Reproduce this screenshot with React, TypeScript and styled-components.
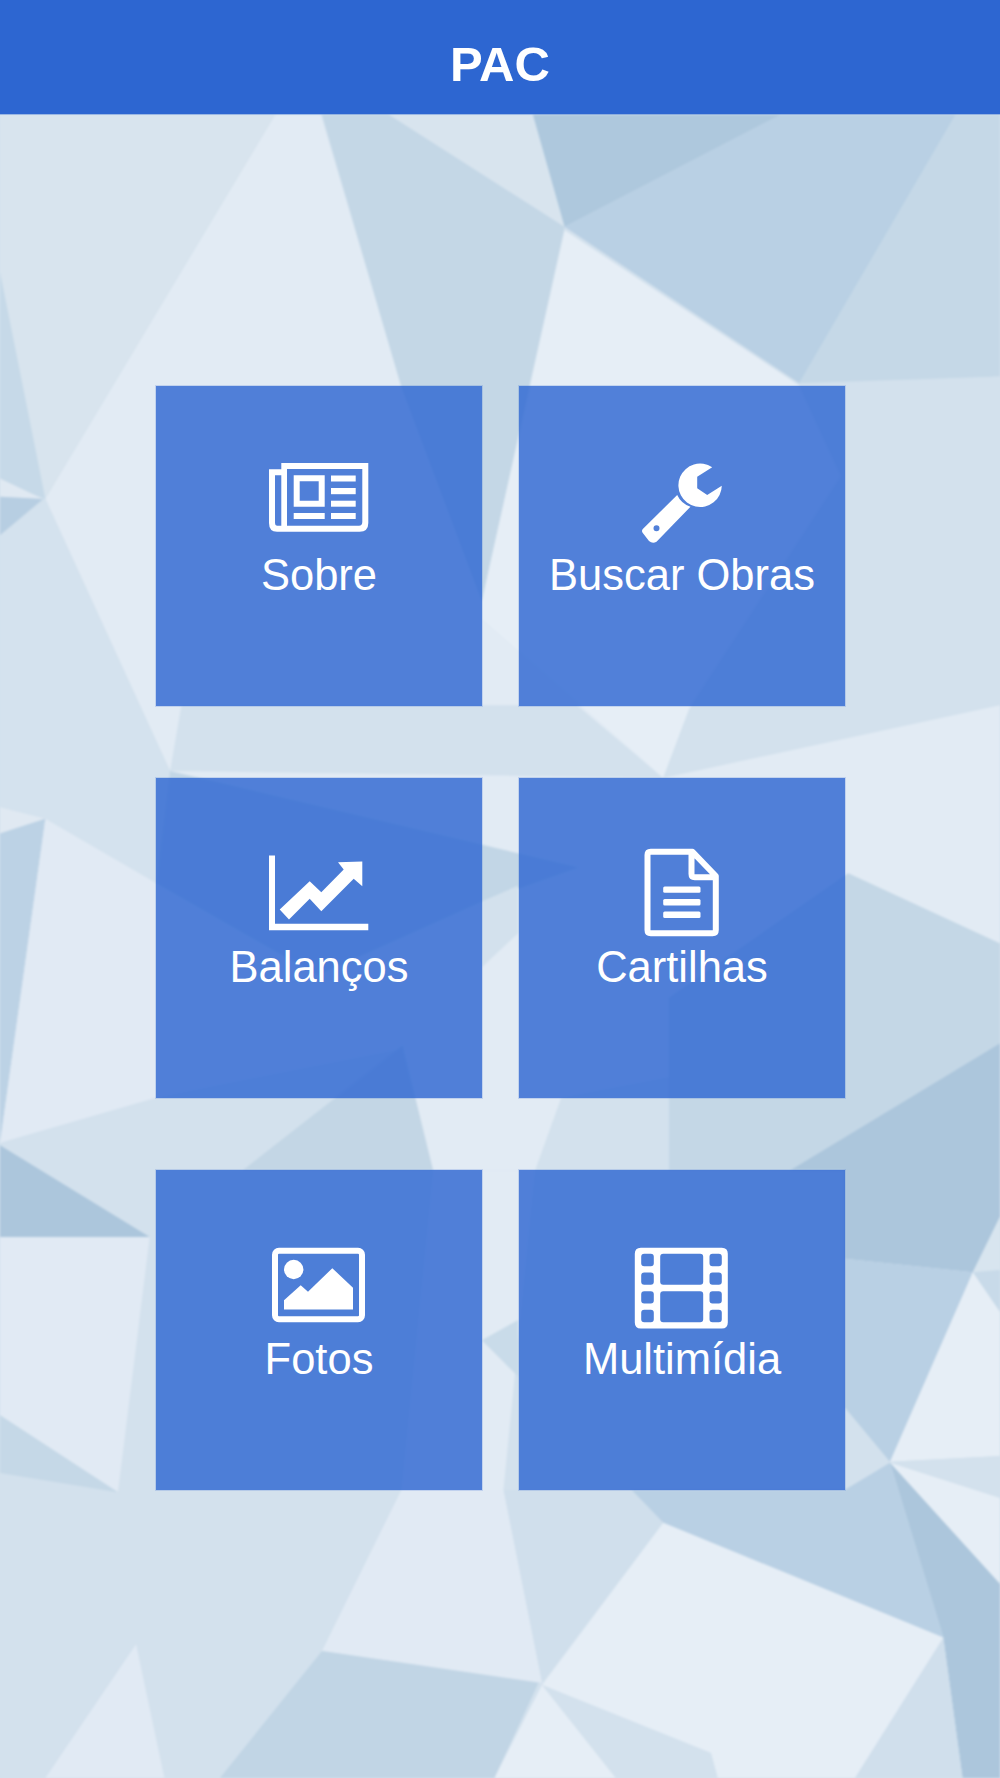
import styled, { createGlobalStyle } from "styled-components";

const GlobalStyle = createGlobalStyle`
  html, body {
    margin: 0;
    padding: 0;
    background: #d3e1ed;
  }
`;

// low-poly wallpaper, drawn back to front, coords in a 882x1568 box
const FACETS: [string, string][] = [
  ["0,0 882,0 882,1568 0,1568", "#d3e1ed"],
  // upper left
  ["0,101 243,101 40,440 0,240", "#d8e4ee"],
  ["0,240 40,440 0,425", "#c6d9e8"],
  ["0,422 38,440 0,438", "#e0e9f2"],
  ["0,438 38,440 0,472", "#b7cee2"],
  ["243,101 283,101 354,341 425,530 425,546 585,686 150,680 40,440", "#e2ebf4"],
  ["160,622 509,622 585,686 150,680", "#d3e1ed"],
  ["0,472 40,440 150,680 138,779 40,722 0,712", "#d4e2ee"],
  // upper middle and right
  ["284,101 343,101 498,200 425,530 354,341", "#c4d7e6"],
  ["343,101 470,101 498,200", "#d8e4ee"],
  ["689,101 843,101 705,338 498,200", "#b9d0e4"],
  ["470,101 689,101 498,200", "#aec8dd"],
  ["843,101 882,101 882,332 705,338", "#c5d8e7"],
  ["498,203 705,340 742,420 608,625 585,686 425,546 425,530", "#e6eef6"],
  ["705,340 882,332 882,622 585,686 608,625 742,420", "#d3e1ed"],
  // middle band
  ["150,680 585,686 882,622 882,832 748,770 600,1032 214,1032 138,968 138,779", "#e2ebf4"],
  ["150,680 510,765 425,795 280,860 138,779", "#c2d6e6"],
  ["425,795 457,781 457,823 425,853", "#d3e1ed"],
  ["0,712 40,722 0,735", "#e0e9f2"],
  ["0,735 40,722 0,1008", "#bcd2e5"],
  ["40,722 138,779 138,968 0,1008", "#e1eaf4"],
  // row gap under the second row
  ["0,1008 138,968 355,925 214,1032 132,1091 0,1010", "#d3e1ed"],
  ["355,922 382,1032 214,1032", "#c3d6e5"],
  ["0,1010 132,1091 0,1091", "#acc6dc"],
  ["495,968 590,950 590,1032 472,1032", "#d3e1ed"],
  ["748,770 882,832 882,920 697,1032 590,1032 590,880", "#c4d7e6"],
  ["882,920 882,1073 858,1122 745,1110 745,1032 697,1032", "#acc6dc"],
  // third row, sides
  ["382,1032 472,1032 444,1314 354,1314", "#e2ebf4"],
  ["425,1182 457,1164 457,1214", "#c9dbe9"],
  ["0,1091 132,1091 104,1316 0,1248", "#e1eaf4"],
  ["0,1248 104,1316 0,1299", "#c5d8e7"],
  ["745,1110 858,1122 785,1289 745,1241", "#b9d0e4"],
  ["882,1073 858,1122 882,1120", "#d8e5ef"],
  ["858,1122 882,1120 882,1157", "#c8dae9"],
  ["858,1122 882,1157 882,1284 785,1289", "#e6eef6"],
  ["785,1289 882,1284 882,1321", "#d3e1ed"],
  ["785,1290 882,1321 882,1397", "#e6eef6"],
  // bottom
  ["785,1290 882,1397 882,1568 849,1568 832,1444", "#acc6dc"],
  ["832,1444 849,1568 754,1568", "#d0dfec"],
  ["557,1314 745,1314 785,1290 832,1444 585,1343", "#b9d0e4"],
  ["444,1314 557,1314 585,1343 478,1484", "#d0dfec"],
  ["585,1343 832,1444 754,1568 633,1568 627,1546 478,1486", "#e6eef6"],
  ["478,1486 627,1546 633,1568 543,1568", "#d3e1ed"],
  ["478,1486 543,1568 436,1568", "#e6eef6"],
  ["354,1314 444,1314 478,1484 284,1456", "#e1eaf4"],
  ["284,1456 475,1484 436,1568 194,1568", "#c1d5e5"],
  ["120,1450 145,1568 40,1568", "#e1eaf4"],
];

const rr = (x: number, y: number, w: number, h: number, r: number) =>
  `M${x + r} ${y}H${x + w - r}Q${x + w} ${y} ${x + w} ${y + r}V${y + h - r}Q${x + w} ${y + h} ${x + w - r} ${y + h}H${x + r}Q${x} ${y + h} ${x} ${y + h - r}V${y + r}Q${x} ${y} ${x + r} ${y}Z`;

const NewsIcon = () => (
  <Icon viewBox="0 0 100 90">
    <path
      fillRule="evenodd"
      d="M0 13.3H12.3V7H99.3V67Q99.3 75.7 90.6 75.7H8Q0 75.7 0 67ZM18 13V69.7H90Q93.3 69.7 93.3 66V13ZM6 19.3V67Q6 69.7 8 69.7H12.3V19.3ZM24.7 19.3V50.7H55.7V19.3ZM30.7 25.3H49.7V44.7H30.7Z"
    />
    <rect x="62" y="19.5" width="24.7" height="6" />
    <rect x="62" y="32" width="24.7" height="6.2" />
    <rect x="62" y="44.7" width="24.7" height="6" />
    <rect x="62" y="57" width="24.7" height="6" />
    <rect x="24.7" y="57" width="31" height="6" />
  </Icon>
);

const WrenchIcon = () => (
  <Icon viewBox="0 0 100 90">
    <path
      fillRule="evenodd"
      d="M80.2 11.3A21.7 21.7 0 1 0 89.8 29.7L75.2 39L65.2 32.3V20.7ZM45.2 39L10.8 73Q9.2 75 10.8 77L17 85Q20.5 88 24.5 85.7L58.5 50.7A21.7 21.7 0 0 1 45.2 39ZM24.5 69.3A3 3 0 1 1 24.5 75.3A3 3 0 1 1 24.5 69.3Z"
    />
  </Icon>
);

const ChartIcon = () => (
  <Icon viewBox="0 0 100 90">
    <path d="M0 7.5H6V75.8H99.3V82.2H0Z" />
    <path d="M10.7 61.5L40.7 33.2L52.3 44.2L74.7 21.5L69 14.2L93.3 13.5V38.2L84.7 30.8L52.3 63.2L40.7 50.8L20 71.5Z" />
  </Icon>
);

const DocIcon = () => (
  <Icon viewBox="0 0 100 90">
    <path
      fill="none"
      stroke="#fff"
      strokeWidth="6"
      strokeLinejoin="round"
      d="M18.7 3.8H60.5L83.8 28V82Q83.8 85.2 80.6 85.2H18.7Q15.5 85.2 15.5 82V7Q15.5 3.8 18.7 3.8ZM59.5 4V26Q59.5 29.2 62.7 29.2H83.8"
    />
    <rect x="31.2" y="38.5" width="37.3" height="6.3" rx="1.5" />
    <rect x="31.2" y="51" width="37.3" height="6.5" rx="1.5" />
    <rect x="31.2" y="63.5" width="37.3" height="6.5" rx="1.5" />
  </Icon>
);

const PhotoIcon = () => (
  <Icon viewBox="0 0 100 90">
    <rect x="6" y="10.8" width="87" height="68.4" rx="4" fill="none" stroke="#fff" strokeWidth="6" />
    <circle cx="24.7" cy="29.5" r="9.7" />
    <path d="M15 60.2L31.7 45.2L39 51.8L63.3 28.2L84 47.8V69.5H15Z" />
  </Icon>
);

const FILM_HOLES = [
  rr(9.2, 13.8, 12.6, 12.4, 3),
  rr(9.2, 32.5, 12.6, 12.3, 3),
  rr(9.2, 51.2, 12.6, 12.3, 3),
  rr(9.2, 69.8, 12.6, 12.4, 3),
  rr(77.5, 13.8, 12.3, 12.4, 3),
  rr(77.5, 32.5, 12.3, 12.3, 3),
  rr(77.5, 51.2, 12.3, 12.3, 3),
  rr(77.5, 69.8, 12.3, 12.4, 3),
  rr(28.2, 13.8, 43, 31, 3),
  rr(28.2, 51.2, 43, 31, 3),
];

const FilmIcon = () => (
  <Icon viewBox="0 0 100 90">
    <path fillRule="evenodd" d={rr(2.8, 7.8, 93, 80.7, 6) + FILM_HOLES.join("")} />
  </Icon>
);

const MENU = [
  { label: "Sobre", icon: <NewsIcon /> },
  { label: "Buscar Obras", icon: <WrenchIcon /> },
  { label: "Balanços", icon: <ChartIcon /> },
  { label: "Cartilhas", icon: <DocIcon /> },
  { label: "Fotos", icon: <PhotoIcon /> },
  { label: "Multimídia", icon: <FilmIcon /> },
];

const App = () => {
  return (
    <Page>
      <GlobalStyle />
      <Wallpaper viewBox="0 0 882 1568" preserveAspectRatio="none">
        {FACETS.map(([points, fill]) => (
          <polygon key={points} points={points} fill={fill} />
        ))}
      </Wallpaper>
      <Header>PAC</Header>
      <Grid>
        {MENU.map((item) => (
          <Tile key={item.label}>
            {item.icon}
            <Label>{item.label}</Label>
          </Tile>
        ))}
      </Grid>
    </Page>
  );
};

export default App;

const Page = styled.div`
  position: relative;
  width: 1000px;
  height: 1778px;
  overflow: hidden;
  font-family: "Liberation Sans", Arial, sans-serif;
`;

const Wallpaper = styled.svg`
  position: absolute;
  inset: 0;
  width: 1000px;
  height: 1778px;
  filter: blur(1.2px);
`;

const Header = styled.header`
  position: relative;
  box-sizing: border-box;
  height: 114px;
  padding-top: 13px;
  display: flex;
  align-items: center;
  justify-content: center;
  background: #2d66d1;
  box-shadow: 0 1px 0 rgba(45, 102, 209, 0.35);
  color: #fff;
  font-size: 49px;
  font-weight: 700;
`;

const Grid = styled.main`
  position: relative;
  display: grid;
  grid-template-columns: 326px 326px;
  grid-auto-rows: 320px;
  column-gap: 37px;
  row-gap: 72px;
  padding: 272px 0 0 156px;
`;

const Tile = styled.a`
  display: flex;
  flex-direction: column;
  align-items: center;
  padding-top: 70px;
  background: rgba(45, 102, 209, 0.81);
  box-shadow: 0 0 0 1px rgba(45, 102, 209, 0.18);
  color: #fff;
`;

const Icon = styled.svg`
  width: 100px;
  height: 90px;
  fill: #fff;
  flex: none;
`;

const Label = styled.span`
  font-size: 43.5px;
  line-height: 50px;
  margin-top: 4px;
`;
